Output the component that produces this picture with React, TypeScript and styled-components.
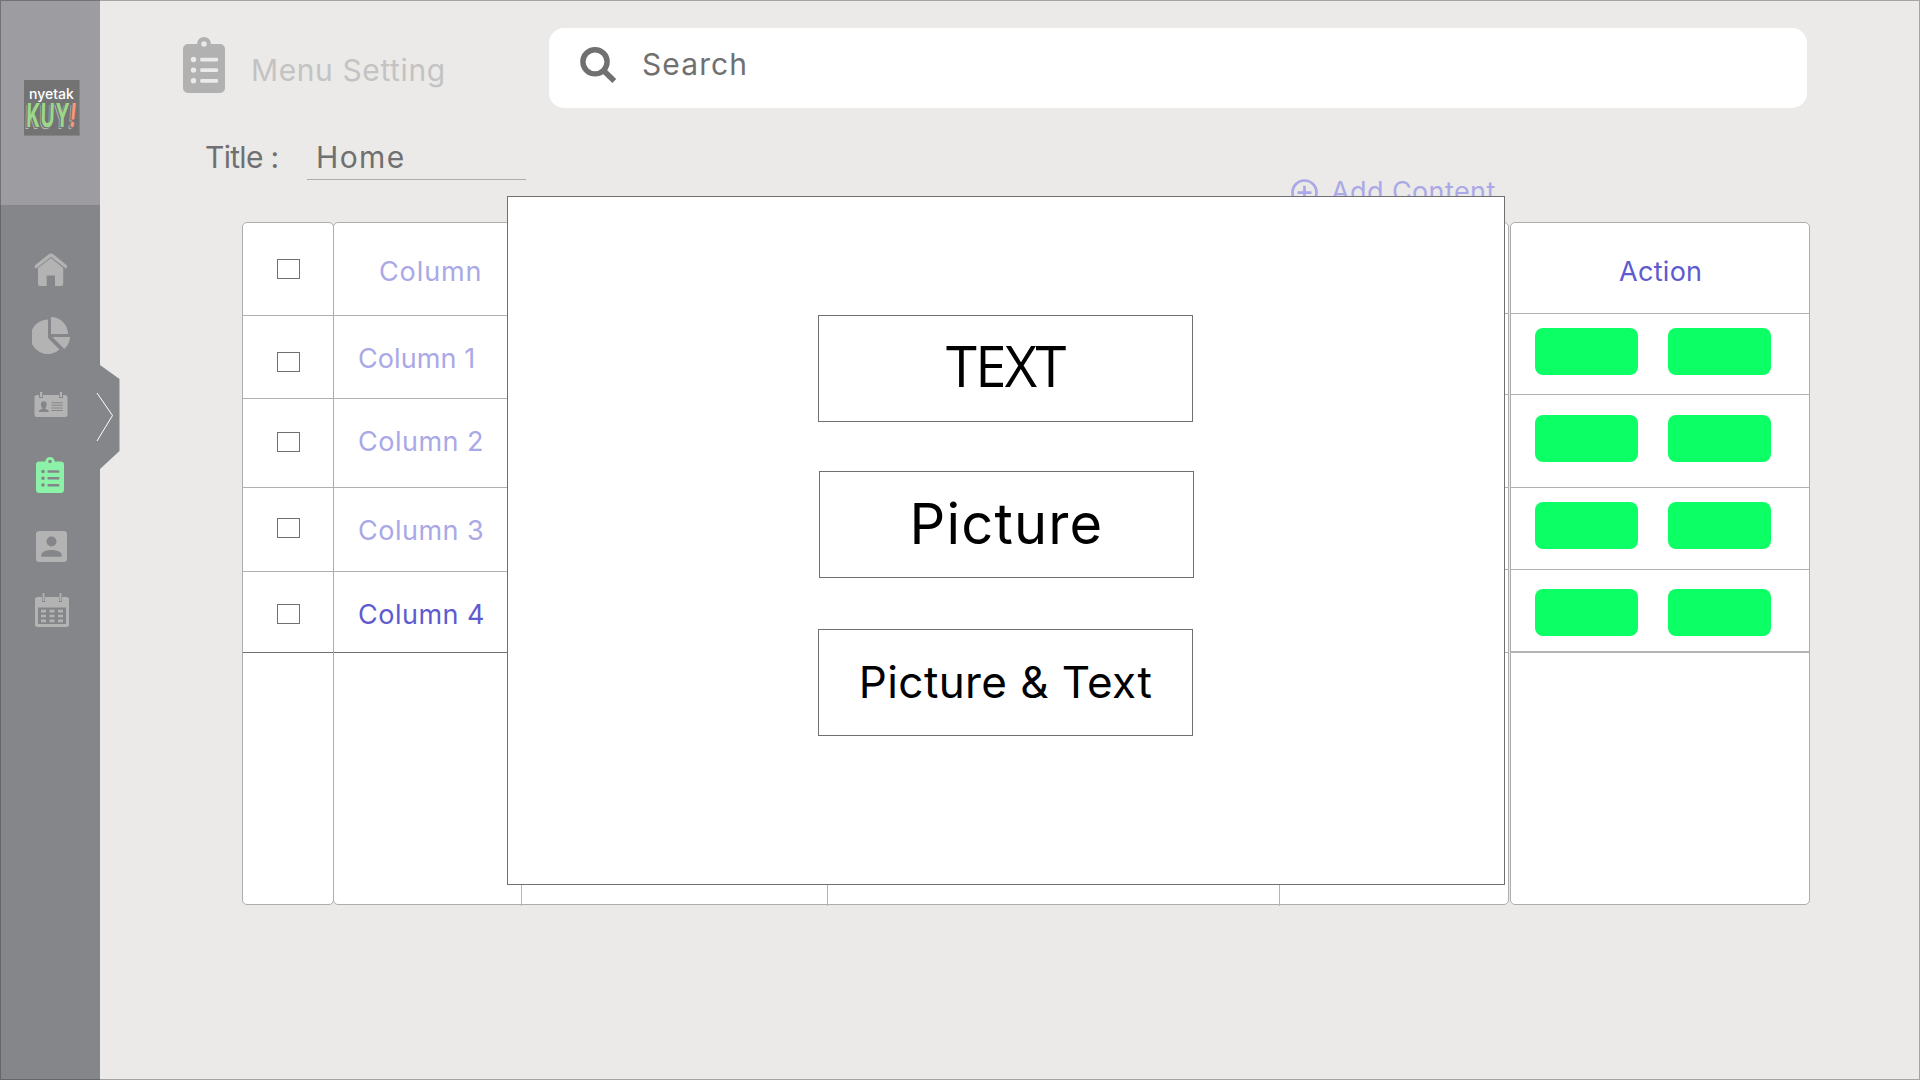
import React from 'react';
import styled, { createGlobalStyle } from 'styled-components';

const Global = createGlobalStyle`
  * { box-sizing: border-box; }
  body { margin: 0; background: #ebeae8; overflow: hidden; font-family: Inter, "Open Sans", sans-serif; }
`;

const Page = styled.div`
  position: relative;
  display: flex;
  width: 1920px;
  height: 1080px;
  background: #ebeae8;
  &::after {
    content: '';
    position: absolute;
    inset: 0;
    border: 1px solid rgba(50, 50, 50, 0.38);
    pointer-events: none;
  }
`;

const Sidebar = styled.aside`
  position: relative;
  flex: none;
  display: flex;
  flex-direction: column;
  width: 100px;
  background: #858689;
`;

const Brand = styled.div`
  height: 205px;
  padding: 80px 0 0 24px;
  background: #9c9ca1;
`;

const Logo = styled.div`
  display: flex;
  flex-direction: column;
  align-items: center;
  width: 56px;
  height: 56px;
  padding-top: 6px;
  overflow: hidden;
  background: #737373;
  border: solid #858588;
  border-width: 0 1px 1px 0;
`;

const LogoTop = styled.span`
  color: #fff;
  font-size: 14px;
  font-weight: 500;
  line-height: 15px;
  letter-spacing: 0;
`;

const LogoBottom = styled.span`
  color: #9bd98a;
  font-size: 33px;
  font-weight: 700;
  line-height: 28px;
  letter-spacing: 1px;
  white-space: nowrap;
  transform: scaleX(0.58) skewX(-3deg);
  text-shadow: -2px 1px 0 #737373, -3px 2px 0 #b8b8b8;
  em { color: #ff9478; font-style: normal; display: inline-block; transform: skewX(-6deg); }
`;

const Nav = styled.nav`
  display: flex;
  flex-direction: column;
`;

const NavItem = styled.a<{ $top: number; $left: number; $active?: boolean }>`
  display: block;
  margin-top: ${p => p.$top}px;
  margin-left: ${p => p.$left}px;
  color: ${p => (p.$active ? '#8cf2a7' : '#b3b3b3')};
  svg { display: block; }
`;

const Handle = styled.svg`
  position: absolute;
  left: 94px;
  top: 365px;
`;

const Main = styled.main`
  flex: 1;
  display: flex;
  flex-direction: column;
`;

const Header = styled.header`
  display: flex;
  align-items: flex-start;
  height: 143px;
  padding: 28px 0 0 83px;
  color: #b1b1b1;
`;

const HeaderIcon = styled.div`
  width: 68px;
  padding-top: 9px;
`;

const Label = styled.span<{ $size: number; $spacing?: number; $color?: string; $family?: string }>`
  display: block;
  font-size: ${p => p.$size}px;
  line-height: ${p => p.$size}px;
  letter-spacing: ${p => p.$spacing ?? 0}px;
  font-weight: 400;
  font-family: ${p => p.$family ?? 'inherit'};
  color: ${p => p.$color ?? '#aaa8e6'};
  white-space: nowrap;
`;

const PageTitle = styled.div`
  width: 298px;
  padding-top: 27px;
`;

const SearchBox = styled.div`
  display: flex;
  align-items: flex-start;
  width: 1258px;
  height: 80px;
  padding: 19px 0 0 31px;
  gap: 25px;
  background: #fff;
  border-radius: 15px;
  color: #707070;
  span { padding-top: 2px; }
`;

const TitleRow = styled.div`
  display: flex;
  height: 79px;
  padding-left: 105px;
  span { margin-top: -1px; }
`;

const TitleLabel = styled.div`
  width: 102px;
`;

const TitleField = styled.div`
  width: 219px;
  height: 37px;
  padding-left: 9px;
  border-bottom: 1px solid #adadad;
`;

const AddContent = styled.a`
  display: flex;
  gap: 13px;
  margin-left: 765px;
  padding-top: 36px;
  color: #aaa8e6;
`;

const Table = styled.section`
  display: flex;
  height: 683px;
  padding-left: 142px;
`;

const Panel = styled.div<{ $width: number; $gap?: number }>`
  display: flex;
  width: ${p => p.$width}px;
  margin-left: ${p => p.$gap ?? 0}px;
  background: #fff;
  border: 1px solid #adadad;
  border-radius: 5px;
`;

const Column = styled.div<{ $width?: number }>`
  flex: ${p => (p.$width ? 'none' : 1)};
  width: ${p => (p.$width ? `${p.$width}px` : 'auto')};
  height: ${p => (p.$width ? '683px' : 'auto')};
  border-right: ${p => (p.$width ? '1px solid #b5b5b5' : 'none')};
`;

const Cell = styled.div<{ $height: number; $pad: number; $left: number; $line?: string; $thick?: boolean }>`
  display: flex;
  gap: 30px;
  height: ${p => p.$height}px;
  padding: ${p => p.$pad}px 0 0 ${p => p.$left}px;
  border-bottom: ${p => (p.$thick ? 2 : 1)}px solid ${p => p.$line ?? '#b1b1b1'};
`;

const Checkbox = styled.div`
  width: 23px;
  height: 20px;
  border: 1px solid #707070;
`;

const ActionButton = styled.button`
  width: 103px;
  height: 47px;
  padding: 0;
  border: 0;
  border-radius: 8px;
  background: #0dff66;
`;

const Modal = styled.div`
  position: absolute;
  left: 507px;
  top: 196px;
  display: flex;
  flex-direction: column;
  width: 998px;
  height: 689px;
  padding: 118px 0 0 310px;
  background: #fff;
  border: 1px solid #707070;
`;

const Choice = styled.button<{ $gap: number; $pad: number; $shift?: number }>`
  display: flex;
  justify-content: center;
  align-items: flex-start;
  width: 375px;
  height: 107px;
  margin: 0 0 ${p => p.$gap}px ${p => p.$shift ?? 0}px;
  padding: ${p => p.$pad}px 0 0;
  background: #fff;
  border: 1px solid #707070;
  font-family: inherit;
`;

const Clipboard = ({ width, height }: { width: number; height: number }) => (
  <svg width={width} height={height} viewBox="0 0 42 56" preserveAspectRatio="none" fill="currentColor">
    <path
      fillRule="evenodd"
      d="M5 7h9a7 7 0 0 1 14 0h9a5 5 0 0 1 5 5v39a5 5 0 0 1-5 5H5a5 5 0 0 1-5-5V12a5 5 0 0 1 5-5zM21 4.200a2.700 2.700 0 1 0 0 5.400a2.700 2.700 0 1 0 0-5.400zM10.500 19.800a2.700 2.700 0 1 0 0 5.400a2.700 2.700 0 1 0 0-5.400zM10.500 30.400a2.700 2.700 0 1 0 0 5.400a2.700 2.700 0 1 0 0-5.400zM10.500 41a2.700 2.700 0 1 0 0 5.400a2.700 2.700 0 1 0 0-5.400zM18.500 20.700h15.300a1.300 1.300 0 0 1 1.300 1.300v1.200a1.300 1.300 0 0 1-1.300 1.300H18.500a1.300 1.300 0 0 1-1.300-1.300V22a1.300 1.300 0 0 1 1.300-1.300zM18.500 31.300h15.300a1.300 1.300 0 0 1 1.300 1.300v1.200a1.300 1.300 0 0 1-1.300 1.300H18.500a1.300 1.300 0 0 1-1.300-1.300v-1.200a1.300 1.300 0 0 1 1.300-1.300zM18.500 41.900h15.300a1.300 1.300 0 0 1 1.300 1.300v1.200a1.300 1.300 0 0 1-1.300 1.300H18.500a1.300 1.300 0 0 1-1.300-1.300v-1.200a1.300 1.300 0 0 1 1.300-1.300z"
    />
  </svg>
);

const HomeIcon = () => (
  <svg width="34" height="33" viewBox="0 0 34 33">
    <path
      fill="currentColor"
      d="M17 5L29.200 15V31a2 2 0 0 1-2 2H21V22.500H12.700V33H6a2 2 0 0 1-2-2V15Z"
    />
    <path
      fill="currentColor"
      stroke="#858689"
      strokeWidth="0.600"
      d="M14.800.900Q17-.700 19.200.900L32.600 11.800Q33.800 13 33 15.200L31.800 15.800L17 4.300L2.200 15.800L.800 15.200Q-.200 13 1.200 11.800Z"
    />
  </svg>
);

const PieIcon = () => (
  <svg width="39" height="37" viewBox="0 0 39 37" fill="currentColor">
    <path d="M16 2.500V21L27.500 32.600A17.300 17.300 0 1 1 16 2.500Z" />
    <path d="M19 0A17 17 0 0 1 36 17H19Z" />
    <path d="M20.500 20H38.200Q37.500 27 32.400 32Z" />
  </svg>
);

const CardIcon = () => (
  <svg width="34" height="25" viewBox="0 0 34 25" fill="currentColor">
    <path
      fillRule="evenodd"
      d="M3 3h2v3h4V3h16v3h4V3h2a2.500 2.500 0 0 1 2.500 2.500v17A2.500 2.500 0 0 1 31 25H3A2.500 2.500 0 0 1 .5 22.500v-17A2.500 2.500 0 0 1 3 3zM9.700 9.200c-3.600 0-3.300 5.300-1.200 7c0 1.200-3.700.8-3.700 3.800h10c0-3-3.700-2.600-3.700-3.800c2.200-1.700 2.500-7-1.400-7zM17.500 10.200v1h11.300v-1zM17.500 12.800v1h11.300v-1zM17.500 15.400v1h11.300v-1zM17.500 18v1h11.300v-1z"
    />
    <path d="M6 0h2.200v5H6zM25.800 0H28v5h-2.200z" />
  </svg>
);

const ContactIcon = () => (
  <svg width="31" height="31" viewBox="0 0 31 31" fill="currentColor">
    <path
      fillRule="evenodd"
      d="M3 0h25a3 3 0 0 1 3 3v25a3 3 0 0 1-3 3H3a3 3 0 0 1-3-3V3a3 3 0 0 1 3-3zM15.500 5.500a5 5 0 1 0 0 10a5 5 0 1 0 0-10zM5.300 25.700h20.400v-1.800C25.700 20.500 20 19 15.500 19S5.300 20.500 5.300 23.900z"
    />
  </svg>
);

const CalendarIcon = () => (
  <svg width="34" height="35" viewBox="0 0 34 35">
    <path
      fill="currentColor"
      fillRule="evenodd"
      d="M2.500 4H7v5h3V4h14v5h3V4h4.500A2.500 2.500 0 0 1 34 6.500v25a2.500 2.500 0 0 1-2.500 2.500h-29A2.500 2.500 0 0 1 0 31.500v-25A2.500 2.500 0 0 1 2.500 4zM3 14.500V31h28V14.500z"
    />
    <path fill="currentColor" d="M7.600 0h1.800v8H7.600zM24.600 0h1.800v8h-1.800z" />
    <path stroke="currentColor" strokeWidth="2.700" strokeDasharray="5 3.500" d="M6 18.200h22.500M6 23h22.500M6 27.800h22.500" />
  </svg>
);

const SearchIcon = () => (
  <svg width="37" height="37" viewBox="0 0 37 37" fill="none" stroke="currentColor">
    <circle cx="15" cy="14.800" r="12.100" strokeWidth="5.400" />
    <path d="M24 24L34.300 34" strokeWidth="5.600" />
  </svg>
);

const PlusIcon = () => (
  <svg width="27" height="27" viewBox="0 0 27 27" fill="none" stroke="currentColor" strokeWidth="2.700">
    <circle cx="13.500" cy="13.500" r="12" />
    <path d="M6.500 13.700h14M13.500 6.700v14" />
  </svg>
);

const rows = [
  { height: 93, check: 36, text: 35, left: 45, name: 'Column', spacing: 0.9 },
  { height: 83, check: 36, text: 29, left: 24, name: 'Column 1', spacing: 0.1 },
  { height: 89, check: 33, text: 29, left: 24, name: 'Column 2', spacing: 0.5 },
  { height: 84, check: 30, text: 29, left: 24, name: 'Column 3', spacing: 0.5 },
  { height: 81, check: 32, text: 29, left: 24, name: 'Column 4', spacing: 0.5, active: true },
];

const actionRows = [
  { height: 81, pad: 14 },
  { height: 93, pad: 20 },
  { height: 82, pad: 14 },
  { height: 83, pad: 19 },
];

const lineFor = (i: number, last: number) => (i === last ? '#707070' : '#b1b1b1');

export default function App() {
  return (
    <Page>
      <Global />
      <Sidebar>
        <Brand>
          <Logo>
            <LogoTop>nyetak</LogoTop>
            <LogoBottom>KUY<em>!</em></LogoBottom>
          </Logo>
        </Brand>
        <Nav>
          <NavItem $top={48} $left={34}><HomeIcon /></NavItem>
          <NavItem $top={31} $left={32}><PieIcon /></NavItem>
          <NavItem $top={38} $left={34}><CardIcon /></NavItem>
          <NavItem $top={40} $left={36} $active><Clipboard width={28} height={36} /></NavItem>
          <NavItem $top={38} $left={36}><ContactIcon /></NavItem>
          <NavItem $top={31} $left={35}><CalendarIcon /></NavItem>
        </Nav>
        <Handle width="26" height="104" viewBox="0 0 26 104">
          <path d="M5 0H6L25.500 14V86L6 104H5Z" fill="#858689" />
          <path d="M3 28L18.500 50.500L3 76" fill="none" stroke="#fff" strokeWidth="1" />
        </Handle>
      </Sidebar>
      <Main>
        <Header>
          <HeaderIcon><Clipboard width={42} height={56} /></HeaderIcon>
          <PageTitle><Label $size={30} $spacing={0.6} $color="#c3c3c3">Menu Setting</Label></PageTitle>
          <SearchBox>
            <SearchIcon />
            <Label $size={30} $spacing={1.1} $color="#707070">Search</Label>
          </SearchBox>
        </Header>
        <TitleRow>
          <TitleLabel><Label $size={30} $spacing={-0.7} $color="#707070">Title :</Label></TitleLabel>
          <TitleField><Label $size={30} $spacing={1.4} $color="#707070">Home</Label></TitleField>
          <AddContent>
            <PlusIcon />
            <Label $size={27} $spacing={0.4}>Add Content</Label>
          </AddContent>
        </TitleRow>
        <Table>
          <Panel $width={92}>
            <Column>
              {rows.map((r, i) => (
                <Cell key={r.name} $height={r.height} $pad={r.check} $left={34} $line={lineFor(i, 4)}><Checkbox /></Cell>
              ))}
            </Column>
          </Panel>
          <Panel $width={1176} $gap={-1}>
            <Column $width={188}>
              {rows.map((r, i) => (
                <Cell key={r.name} $height={r.height} $pad={r.text} $left={r.left} $line={lineFor(i, 4)}>
                  <Label $size={27} $spacing={r.spacing} $color={r.active ? '#5e5ad0' : '#aaa8e6'}>{r.name}</Label>
                </Cell>
              ))}
            </Column>
            <Column $width={306} />
            <Column $width={452} />
            <Column>
              <Cell $height={91} $pad={0} $left={0} />
              {actionRows.map((r, i) => <Cell key={i} $height={r.height} $pad={0} $left={0} />)}
            </Column>
          </Panel>
          <Panel $width={300} $gap={1}>
            <Column>
              <Cell $height={91} $pad={35} $left={108}><Label $size={27} $spacing={0.3} $color="#5e5ad0">Action</Label></Cell>
              {actionRows.map((r, i) => (
                <Cell key={i} $height={r.height} $pad={r.pad} $left={24} $line={i === 3 ? '#b3b3b3' : undefined} $thick={i === 3}>
                  <ActionButton />
                  <ActionButton />
                </Cell>
              ))}
            </Column>
          </Panel>
        </Table>
      </Main>
      <Modal>
        <Choice $gap={49} $pad={21}><Label $size={56} $spacing={-1.6} $color="#000" $family='"Open Sans", sans-serif'>TEXT</Label></Choice>
        <Choice $gap={51} $pad={24} $shift={1}><Label $size={56} $spacing={1.2} $color="#000">Picture</Label></Choice>
        <Choice $gap={0} $pad={30}><Label $size={44} $spacing={0.4} $color="#000">Picture &amp; Text</Label></Choice>
      </Modal>
    </Page>
  );
}
